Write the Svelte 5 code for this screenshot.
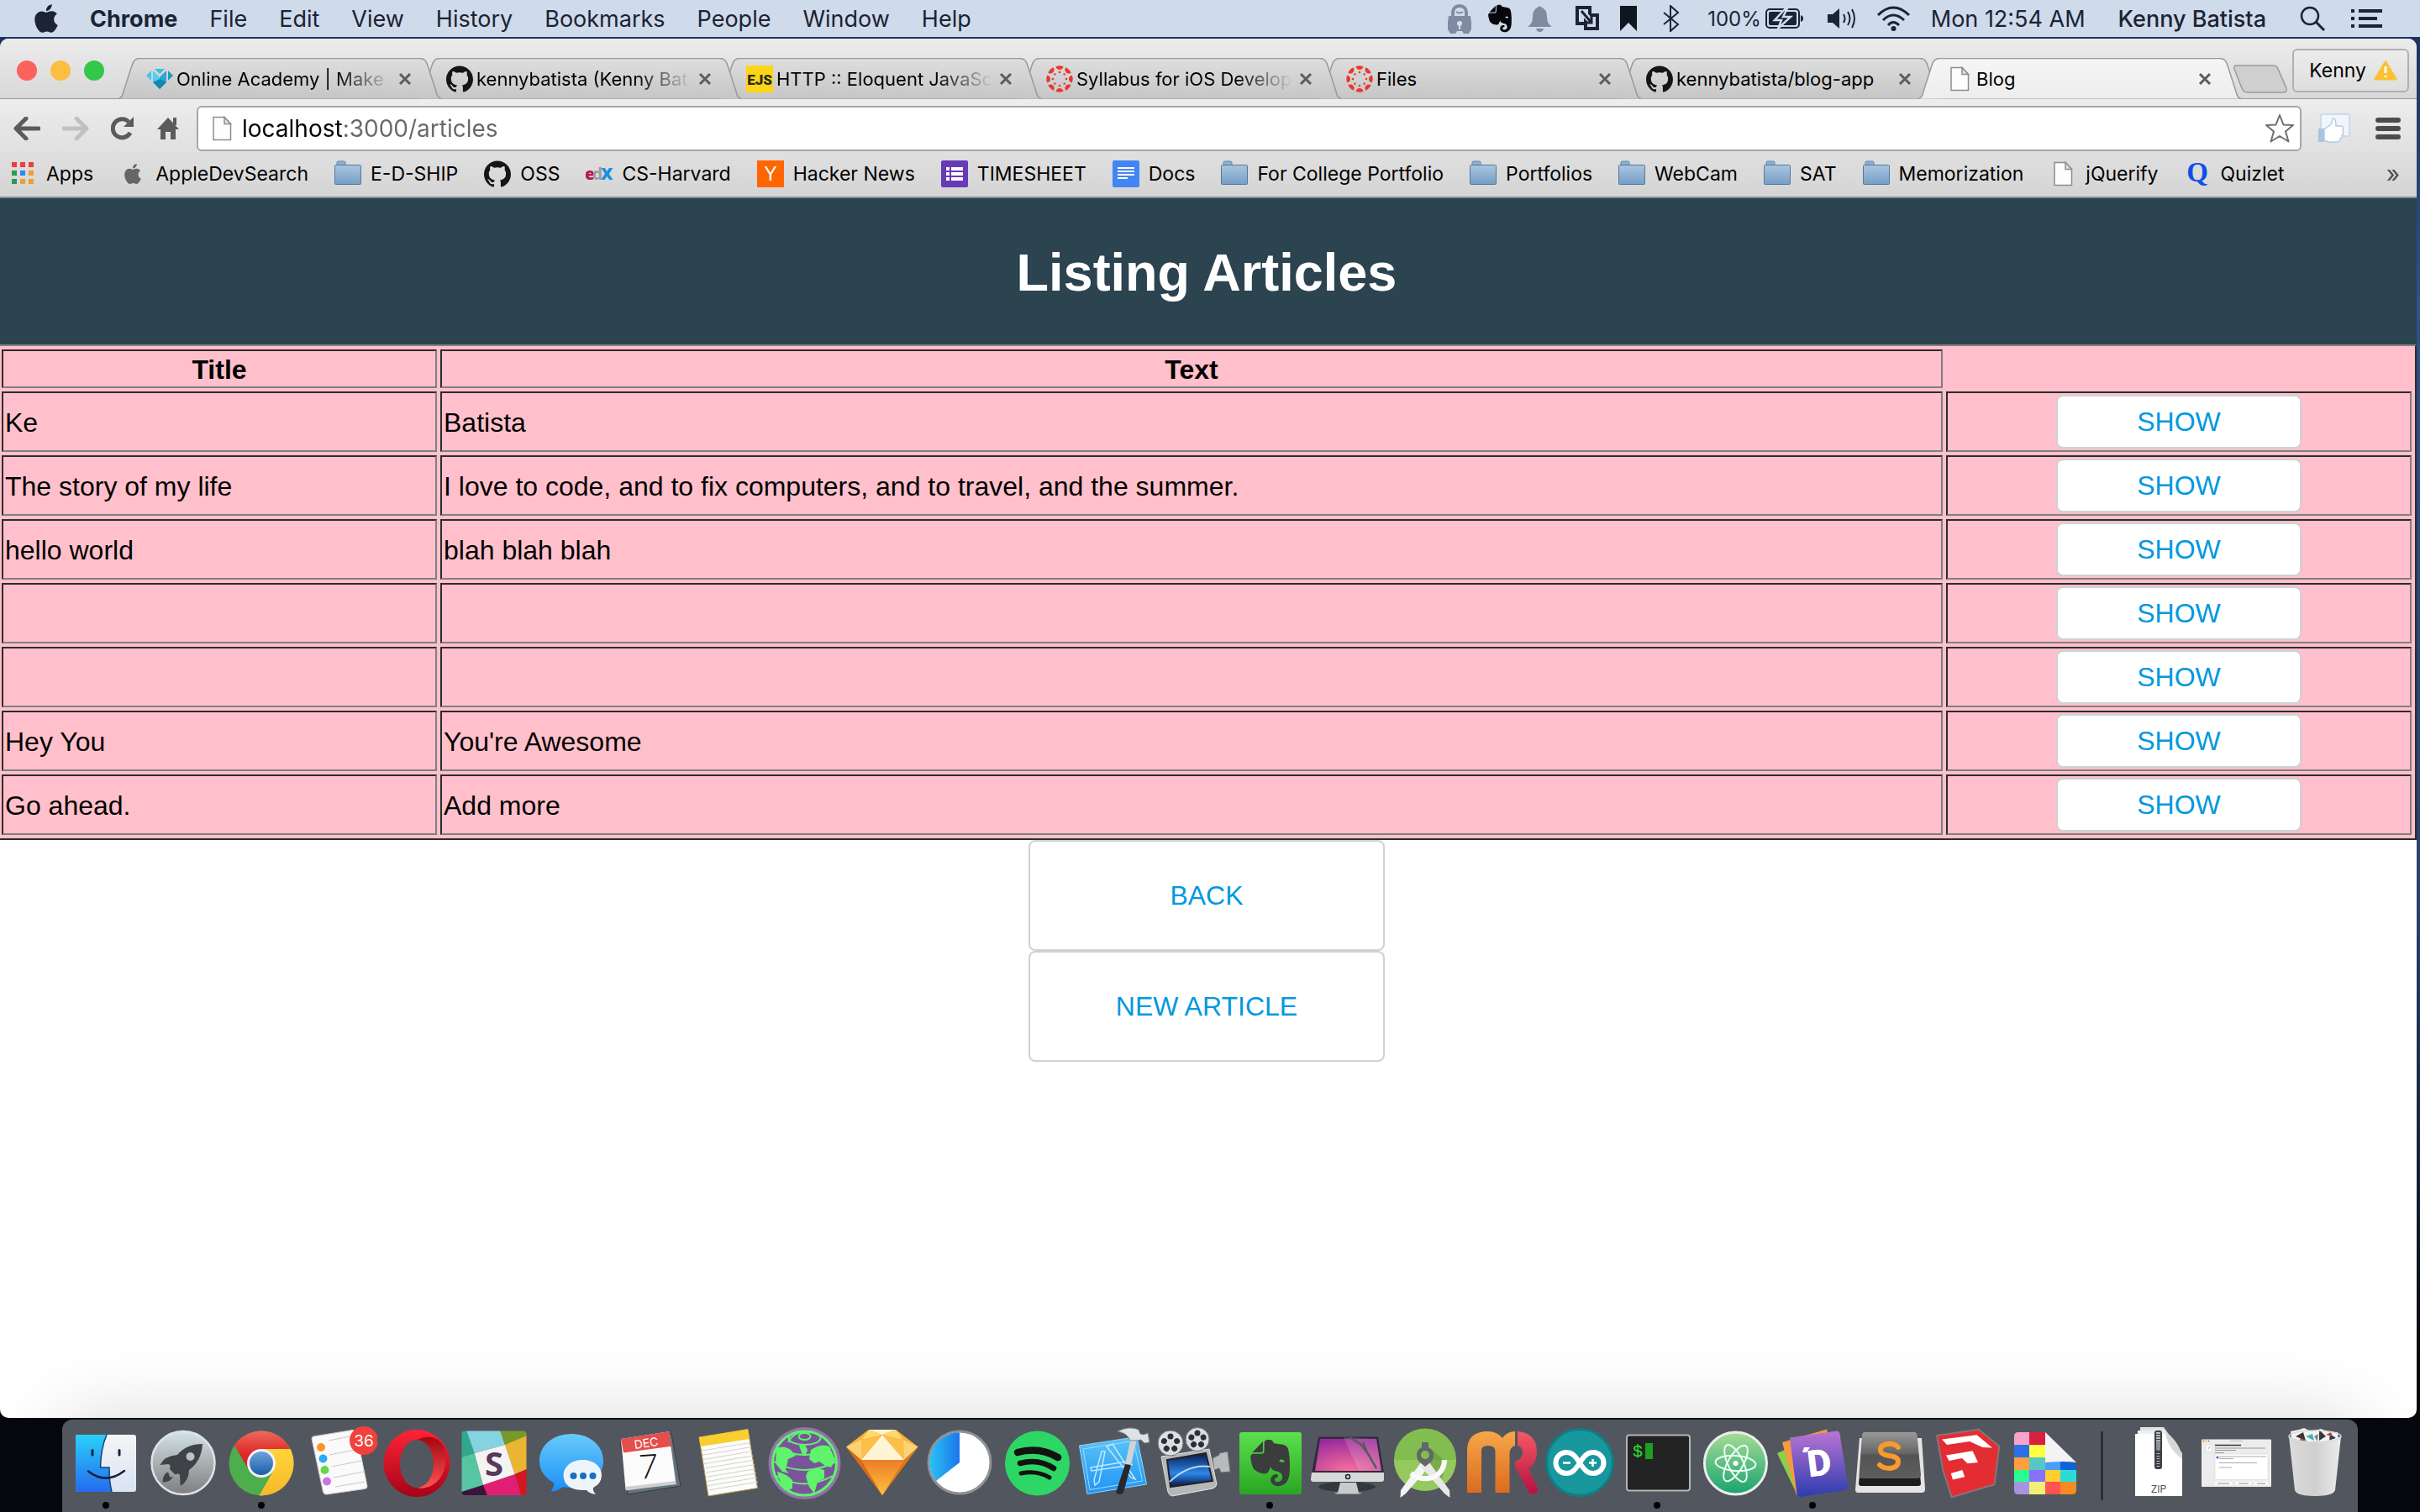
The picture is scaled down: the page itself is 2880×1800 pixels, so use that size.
<script>
  const menus = ['File', 'Edit', 'View', 'History', 'Bookmarks', 'People', 'Window', 'Help'];

  const tabs = [
    { title: 'Online Academy | Make', icon: 'academy', long: true },
    { title: 'kennybatista (Kenny Bat', icon: 'github', long: true },
    { title: 'HTTP :: Eloquent JavaSc', icon: 'ejs', long: true },
    { title: 'Syllabus for iOS Develop', icon: 'canvas', long: true },
    { title: 'Files', icon: 'canvas' },
    { title: 'kennybatista/blog-app', icon: 'github' },
    { title: 'Blog', icon: 'page', active: true }
  ];

  const bookmarks = [
    { label: 'Apps', icon: 'apps' },
    { label: 'AppleDevSearch', icon: 'apple' },
    { label: 'E-D-SHIP', icon: 'folder' },
    { label: 'OSS', icon: 'github' },
    { label: 'CS-Harvard', icon: 'edx' },
    { label: 'Hacker News', icon: 'hn' },
    { label: 'TIMESHEET', icon: 'forms' },
    { label: 'Docs', icon: 'docs' },
    { label: 'For College Portfolio', icon: 'folder' },
    { label: 'Portfolios', icon: 'folder' },
    { label: 'WebCam', icon: 'folder' },
    { label: 'SAT', icon: 'folder' },
    { label: 'Memorization', icon: 'folder' },
    { label: 'jQuerify', icon: 'page' },
    { label: 'Quizlet', icon: 'quizlet' }
  ];

  const articles = [
    { title: 'Ke', text: 'Batista' },
    { title: 'The story of my life', text: 'I love to code, and to fix computers, and to travel, and the summer.' },
    { title: 'hello world', text: 'blah blah blah' },
    { title: '', text: '' },
    { title: '', text: '' },
    { title: 'Hey You', text: "You're Awesome" },
    { title: 'Go ahead.', text: 'Add more' }
  ];

  const apps = [
    { id: 'finder', name: 'Finder', running: true },
    { id: 'launchpad', name: 'Launchpad' },
    { id: 'chrome', name: 'Chrome', running: true },
    { id: 'reminders', name: 'Reminders' },
    { id: 'opera', name: 'Opera' },
    { id: 'slack', name: 'Slack' },
    { id: 'messages', name: 'Messages' },
    { id: 'calendar', name: 'Calendar' },
    { id: 'notes', name: 'Notes' },
    { id: 'tor', name: 'Tor Browser' },
    { id: 'sketch', name: 'Sketch' },
    { id: 'timer', name: 'Timer' },
    { id: 'spotify', name: 'Spotify' },
    { id: 'xcode', name: 'Xcode' },
    { id: 'video', name: 'Video editor' },
    { id: 'evernote', name: 'Evernote', running: true },
    { id: 'cleaner', name: 'CleanMyMac' },
    { id: 'android', name: 'Android Studio' },
    { id: 'rubymine', name: 'Mockup' },
    { id: 'arduino', name: 'Arduino' },
    { id: 'terminal', name: 'Terminal', running: true },
    { id: 'atom', name: 'Atom' },
    { id: 'dash', name: 'Dash', running: true },
    { id: 'sublime', name: 'Sublime Text' },
    { id: 'sketchup', name: 'SketchUp' },
    { id: 'swatches', name: 'Swatches' }
  ];

  const stacks = [
    { id: 'zip', name: 'Archive' },
    { id: 'window', name: 'Minimized window' },
    { id: 'trash', name: 'Trash' }
  ];

  const applePath =
    'M12.152 6.896c-.948 0-2.415-1.078-3.96-1.04-2.04.027-3.91 1.183-4.961 3.014-2.117 3.675-.546 9.103 1.519 12.09 1.013 1.454 2.208 3.09 3.792 3.039 1.52-.065 2.09-.987 3.935-.987 1.831 0 2.35.987 3.96.948 1.637-.026 2.676-1.48 3.676-2.948 1.156-1.688 1.636-3.325 1.662-3.415-.039-.013-3.182-1.221-3.22-4.857-.026-3.04 2.48-4.494 2.597-4.559-1.429-2.09-3.623-2.324-4.39-2.376-2-.156-3.675 1.09-4.61 1.09zM15.53 3.83c.843-1.012 1.4-2.427 1.245-3.83-1.207.052-2.662.805-3.532 1.818-.78.896-1.454 2.338-1.273 3.714 1.338.104 2.715-.688 3.559-1.701';
  const githubPath =
    'M12 .297c-6.63 0-12 5.373-12 12 0 5.303 3.438 9.8 8.205 11.385.6.113.82-.258.82-.577 0-.285-.01-1.04-.015-2.04-3.338.724-4.042-1.61-4.042-1.61C4.422 18.07 3.633 17.7 3.633 17.7c-1.087-.744.084-.729.084-.729 1.205.084 1.838 1.236 1.838 1.236 1.07 1.835 2.809 1.305 3.495.998.108-.776.417-1.305.76-1.605-2.665-.3-5.466-1.332-5.466-5.93 0-1.31.465-2.38 1.235-3.22-.135-.303-.54-1.523.105-3.176 0 0 1.005-.322 3.3 1.23.96-.267 1.98-.399 3-.405 1.02.006 2.04.138 3 .405 2.28-1.552 3.285-1.23 3.285-1.23.645 1.653.24 2.873.12 3.176.765.84 1.23 1.91 1.23 3.22 0 4.61-2.805 5.625-5.475 5.92.42.36.81 1.096.81 2.22 0 1.606-.015 2.896-.015 3.286 0 .315.21.69.825.57C20.565 22.092 24 17.592 24 12.297c0-6.627-5.373-12-12-12';
  const evernotePath =
    'M8.222 5.393c0 .239-.02.637-.256.895-.257.24-.652.259-.888.259H4.552c-.73 0-1.165 0-1.46.04-.159.02-.356.1-.455.14-.04.019-.04 0-.02-.02L8.38.796c.02-.02.04-.02.02.02-.04.099-.118.298-.138.457-.04.298-.04.736-.04 1.472v2.647zm5.348 17.869c-.67-.438-1.026-1.015-1.164-1.373a2.924 2.924 0 0 1-.217-1.095 3.007 3.007 0 0 1 3-3.004c.493 0 .888.398.888.895a.88.88 0 0 1-.454.776c-.099.06-.237.1-.336.12-.098.02-.473.06-.65.218-.198.16-.356.418-.356.697 0 .298.118.577.316.776.355.358.829.557 1.342.557a2.436 2.436 0 0 0 2.427-2.447c0-1.214-.809-2.29-1.875-2.766-.158-.08-.414-.14-.651-.2a8.04 8.04 0 0 0-.592-.1c-.829-.1-2.901-.755-3.04-2.605 0 0-.611 2.785-1.835 3.54-.118.06-.276.12-.454.16-.177.04-.374.06-.434.06-1.993.12-4.105-.517-5.565-2.03 0 0-.987-.815-1.5-3.103-.118-.558-.355-1.553-.493-2.488-.06-.338-.08-.597-.099-.836 0-.975.592-1.631 1.342-1.73h4.026c.69 0 1.086-.18 1.342-.42.336-.317.415-.775.415-1.312V1.354C9.05.617 9.703 0 10.669 0h.474c.197 0 .434.02.651.04.158.02.296.06.533.12 1.204.298 1.46 1.532 1.46 1.532s2.27.398 3.415.597c1.085.199 3.77.378 4.282 3.104 1.204 6.487.474 12.775.415 12.775-.849 6.129-5.901 5.83-5.901 5.83a4.1 4.1 0 0 1-2.428-.736zm4.54-13.034c-.652-.06-1.204.2-1.402.697-.04.1-.079.219-.059.278.02.06.06.08.099.1.237.12.631.179 1.204.239.572.06.967.1 1.223.06.04 0 .08-.02.119-.08.04-.06.02-.18.02-.28-.06-.536-.553-.934-1.204-1.014z';

  const spokes = [0, 45, 90, 135, 180, 225, 270, 315];
  const reelHoles = [0, 72, 144, 216, 288];
  const noteLines = [0, 1, 2, 3, 4, 5, 6, 7, 8, 9];
  const swatches = [
    [9, 15, '#f9a3cb'], [27, 15, '#d81f3d'],
    [9, 30, '#2c70e8'], [27, 30, '#ffff44'],
    [9, 45, '#ff9f3d'], [27, 45, '#56c7c2'], [46, 45, '#46a0f5'], [64, 45, '#1160d8'],
    [9, 60, '#2bfc8f'], [27, 60, '#8672ff'], [46, 60, '#ffce2f'], [64, 60, '#2bdcd5'],
    [9, 74, '#a694e2'], [27, 74, '#f1ef77'], [46, 74, '#ff5352'], [64, 74, '#f58b22']
  ];
</script>

{#snippet smallIcon(kind)}
  <svg class="small" viewBox="0 0 32 32" aria-hidden="true">
    {#if kind === 'github'}
      <path d={githubPath} transform="scale(1.333)" fill="#151515" />
    {:else if kind === 'page'}
      <path d="M6 2.5h13l7.5 8v19H6z" fill="#fdfdfd" stroke="#8d8d8d" stroke-width="1.5" />
      <path d="M19 2.500v8h7.500z" fill="#e4e4e4" stroke="#8d8d8d" stroke-width="1.5" />
    {:else if kind === 'folder'}
      <path d="M3 6V2.500q0-1.500 1.500-1.500h7q1.500 0 1.500 1.500V6z" fill="#8eb0cf" stroke="#5f86a8" />
      <rect x="0.500" y="5.500" width="31" height="23" rx="1" fill="url(#folderFill)" stroke="#56789a" />
    {:else if kind === 'canvas'}
      <g fill="#e63a2e">
        {#each spokes as a}
          <g transform="rotate({a} 16 16)">
            <path d="M11.500 1.200Q16-0.600 20.500 1.200Q19.500 5 16 5Q12.500 5 11.500 1.200z" />
            <circle cx="16" cy="8" r="1.300" />
          </g>
        {/each}
      </g>
    {:else if kind === 'academy'}
      <path d="M0 12L6 6V18z" fill="#45c6ea" />
      <path d="M32 12L26 6V18z" fill="#1c9cc6" />
      <path d="M10 4H22L16 10z" fill="#38bce4" />
      <path d="M8 6L16 14V28L8 20z" fill="#4fd0f2" />
      <path d="M24 6L16 14V28L24 20z" fill="#28a8d2" />
      <path d="M8 20L16 16L24 20L16 28z" fill="#1687b3" />
    {:else if kind === 'ejs'}
      <rect width="32" height="32" fill="#fcd616" />
      <text x="16" y="23" text-anchor="middle" font-family="Roboto, sans-serif" font-weight="900" font-size="17" fill="#2b2a20">EJS</text>
    {:else if kind === 'apps'}
      <g fill="#f23c3c"><rect x="2" y="2" width="6" height="6" /><rect x="12" y="2" width="6" height="6" /><rect x="22" y="2" width="6" height="6" /></g>
      <g fill="#2d9a55"><rect x="2" y="12" width="6" height="6" /><rect x="2" y="22" width="6" height="6" /></g>
      <rect x="12" y="12" width="6" height="6" fill="#2a8bf2" />
      <g fill="#eda02c"><rect x="12" y="22" width="6" height="6" /><rect x="22" y="12" width="6" height="6" /><rect x="22" y="22" width="6" height="6" /></g>
    {:else if kind === 'apple'}
      <path d={applePath} transform="translate(4 4)" fill="#666" />
    {:else if kind === 'edx'}
      <text x="-1" y="23" font-family="Open Sans, sans-serif" font-weight="800" font-size="19" fill="#b5145b">e</text>
      <text x="8" y="23" font-family="Open Sans, sans-serif" font-weight="700" font-size="19" fill="#9b9b9b">d</text>
      <text x="18" y="23" font-family="Open Sans, sans-serif" font-weight="800" font-size="20" fill="#1a8fdf">X</text>
    {:else if kind === 'hn'}
      <rect width="32" height="32" fill="#ff6600" />
      <text x="16" y="24" text-anchor="middle" font-family="Liberation Sans, sans-serif" font-size="23" fill="#fff">Y</text>
    {:else if kind === 'forms'}
      <rect width="32" height="32" rx="2" fill="#673ab7" />
      <g fill="#fff"><rect x="6" y="8" width="4" height="4" /><rect x="12" y="8" width="14" height="4" /><rect x="6" y="14" width="4" height="4" /><rect x="12" y="14" width="14" height="4" /><rect x="6" y="20" width="4" height="4" /><rect x="12" y="20" width="14" height="4" /></g>
    {:else if kind === 'docs'}
      <rect width="32" height="32" rx="2" fill="#4285f4" />
      <g fill="#fff"><rect x="6" y="8" width="20" height="2" /><rect x="6" y="12" width="20" height="2" /><rect x="6" y="16" width="20" height="2" /><rect x="6" y="20" width="12" height="2" /></g>
    {:else if kind === 'quizlet'}
      <text x="15" y="25" text-anchor="middle" font-family="Liberation Serif, serif" font-weight="700" font-size="33" fill="#0d50e8">Q</text>
    {/if}
  </svg>
{/snippet}

{#snippet dockIcon(id)}
  <svg class="dock-icon" viewBox="0 0 92 98" aria-hidden="true">
    {#if id === 'finder'}
      <rect x="10" y="18" width="72" height="68" rx="3" fill="url(#finderRight)" />
      <path d="M13 18H47Q40 34 39.500 57H50Q50 74 53 86H13Q10 86 10 83V21Q10 18 13 18z" fill="url(#finderLeft)" />
      <path d="M47 18Q40 34 39.500 57H50Q50 74 53 86" fill="none" stroke="#1b3f74" stroke-width="1.500" />
      <path d="M30 36.500V42M62 36.500V42" stroke="#16233a" stroke-width="3" stroke-linecap="round" />
      <path d="M25 61.500Q46 78 68 61" fill="none" stroke="#16233a" stroke-width="2.500" stroke-linecap="round" />
    {:else if id === 'launchpad'}
      <circle cx="46" cy="51.500" r="37.500" fill="url(#launch)" stroke="#dbe4ea" stroke-width="2.500" />
      <path d="M69 29Q50 29 39 42Q24 43 18.500 54L29 53L31 56Q29 58 30.500 59.500L36 65Q38 66 40 64L42 66L42.700 79Q53 73 53 60Q68 49 69 29z" fill="#3f4347" />
      <circle cx="54.500" cy="44" r="5" fill="#b9c2c7" />
      <path d="M28 62.500Q22 64 21.500 74.500Q32 74 34 67.500L30.500 69z" fill="#3f4347" />
    {:else if id === 'chrome'}
      <circle cx="46" cy="52" r="38.500" fill="#4cae4c" />
      <path d="M14 30.600A38.500 38.500 0 0 1 80.600 35H46L31.300 60.500z" fill="url(#chromeRed)" />
      <path d="M80.600 35A38.500 38.500 0 0 1 43.400 90.400L60.700 60.500L46 35z" fill="url(#chromeYellow)" />
      <circle cx="46" cy="52" r="17" fill="#f4f4f4" />
      <circle cx="46" cy="52" r="14" fill="url(#chromeBlue)" />
    {:else if id === 'reminders'}
      <path d="M16 20L62 12.500Q66 12 67 16L80 79Q80.500 82 77 82.500L32 89Q28 89.500 27.500 86L14 23Q14 20.500 16 20z" fill="#fafafa" stroke="#c9c9c9" />
      <path d="M34 25L60 20M35 42L70 35M38 56L73 49M40 69L76 62M42 80L77 74" stroke="#c9c9c9" />
      <circle cx="25" cy="33" r="5" fill="#fd9426" /><circle cx="27.500" cy="46.500" r="5" fill="#28acf5" />
      <circle cx="29.500" cy="60" r="5" fill="#64d845" /><circle cx="32" cy="73.500" r="5" fill="#cc73e1" />
      <circle cx="76" cy="25" r="17" fill="#f2403c" />
      <text x="76" y="32" text-anchor="middle" font-family="Inter, sans-serif" font-size="19" fill="#fff">36</text>
    {:else if id === 'opera'}
      <path fill-rule="evenodd" d="M47 12A39.500 40 0 1 1 46.900 12zM47 24A20 28.500 0 1 0 47.100 24z" fill="url(#operaFill)" />
      <path d="M47 24A20 28.500 0 0 1 47 81Q58 84 70 75Q86 60 80 34Q70 14 47 24z" fill="url(#operaInner)" />
    {:else if id === 'slack'}
      <g clip-path="url(#slackClip)">
        <path d="M7 13H13L22.700 40L7 45z" fill="#2fa98c" />
        <path d="M13 13H53.300L59 30L22.700 40z" fill="#85d3e0" />
        <path d="M53.300 13H85V20L59 30z" fill="#78982a" />
        <path d="M59 30L85 19V59L70.700 65z" fill="#ecb433" />
        <path d="M70.700 65L85 59V91H78.500z" fill="#d4161f" />
        <path d="M32.900 77.700L70.700 65L78.500 91H38z" fill="#e01f74" />
        <path d="M7 86L32.900 77.700L38.200 91H7z" fill="#3c123c" />
        <path d="M7 45L22.700 40L32.900 77.700L7 86z" fill="#57c5a1" />
        <path d="M22.700 40L59 30L70.700 65L32.900 77.700z" fill="#f5f3f1" />
      </g>
      <text x="46" y="67" text-anchor="middle" font-family="Open Sans, sans-serif" font-weight="700" font-size="40" fill="#553a5b">S</text>
    {:else if id === 'messages'}
      <path d="M46 17C68 17 84 31 84 49S68 81 46 81Q40 81 36 80Q30 85 21.500 85.500Q26 80 25 75Q8 66 8 49C8 31 24 17 46 17z" fill="url(#messagesFill)" />
      <path d="M59 48C73 48 82 56 82 66Q82 76 72 81Q71 85 75 89Q67 88 64 84Q37 85 36.500 66C37 56 46 48 59 48z" fill="#eef5fa" />
      <circle cx="48.500" cy="67" r="4" fill="#176fc1" /><circle cx="60" cy="67" r="4" fill="#176fc1" /><circle cx="71.500" cy="67" r="4" fill="#176fc1" />
    {:else if id === 'calendar'}
      <path d="M12 27L73 17L84 79L21 89z" fill="#65737c" stroke="#313c43" />
      <path d="M13 23L70 14.300L78.500 76.700L18.500 83z" fill="#fbfbfb" />
      <path d="M13 23L70 14.300L73 31.700L16 39.500z" fill="#e54f4b" />
      <path d="M18 80L78 73L78.500 77L19 84.500z" fill="#cfcfcf" />
      <text x="43" y="33" text-anchor="middle" transform="rotate(-8 43 28)" font-family="Inter, sans-serif" font-size="14" fill="#fff">DEC</text>
      <text x="46" y="70" text-anchor="middle" transform="rotate(-4 46 57)" font-family="Lato, sans-serif" font-weight="300" font-size="40" fill="#111">7</text>
    {:else if id === 'notes'}
      <path d="M13 21L71 11.500L82.500 81.500L24 91z" fill="#fcfcfa" stroke="#b49a4a" />
      <path d="M13 21L71 11.500L73 23L15 32z" fill="#f9cf2f" />
      {#each noteLines as n}
        <path d="M{16 + n} {37 + n * 5.200}L{74 + n} {27.500 + n * 5.200}" stroke="#d2d2d2" />
      {/each}
    {:else if id === 'tor'}
      <circle cx="46.500" cy="52" r="43" fill="#9273ac" />
      <circle cx="46.500" cy="52" r="38" fill="#7a549b" stroke="#5ff46c" stroke-width="3" />
      <g fill="none" stroke="#5ff46c" stroke-width="2"><ellipse cx="46.500" cy="20" rx="7" ry="4" /><ellipse cx="46.500" cy="22" rx="19" ry="8" /><path d="M16 34Q46 50 77 34M10 50Q46 70 84 50M13 67Q46 86 80 67M27 27Q32 16 46 14" /></g>
      <path d="M13 34Q22 30 30 36L36 43L27 47L24 60L28 64L20 62L12 52zM14 62Q24 64 32 72L32 82L26 84Q16 76 14 62zM40 31Q46 26 50 36Q48 44 44 42zM54 36Q66 28 76 32L83 48L78 57L70 54L64 50L58 52L52 47zM50 62Q60 56 70 60L70 70L62 74L58 88L52 80L48 68z" fill="#5ff46c" />
    {:else if id === 'sketch'}
      <path d="M31 12H63L89.500 32.500L47 90L4 32.500z" fill="#f5972a" />
      <path d="M31 12H63L47 18z" fill="#fff3cd" />
      <path d="M31 12L47 18L22 24zM63 12L47 18L72 24z" fill="#ffd96e" />
      <path d="M31 12L22 24L4 32.500zM63 12L72 24L89.500 32.500z" fill="#f9b437" />
      <path d="M47 18L22 48H73z" fill="#fff4d6" />
      <path d="M22 24L47 18L22 48zM72 24L47 18L73 48z" fill="#fdbf49" />
      <path d="M22 24L4 32.500L22 48zM72 24L89.500 32.500L73 48z" fill="#fbd377" />
      <path d="M4 32.500L22 48L47 90z" fill="#d86b12" /><path d="M89.500 32.500L73 48L47 90z" fill="#dd7717" />
      <path d="M22 48H73L47 90z" fill="url(#sketchFill)" />
    {:else if id === 'timer'}
      <circle cx="46" cy="51" r="37" fill="#fff" stroke="#8f9194" stroke-width="3" />
      <path d="M46 51V15.500A35.500 35.500 0 0 0 18 73z" fill="url(#timerFill)" />
    {:else if id === 'spotify'}
      <circle cx="46.500" cy="52" r="38.500" fill="#2ed665" />
      <g fill="none" stroke="#121212" stroke-linecap="round"><path d="M23 39Q49 32 71 45" stroke-width="8.500" /><path d="M26 52Q48 46 66 58" stroke-width="6.500" /><path d="M27 64Q46 60 61 69" stroke-width="5" /></g>
    {:else if id === 'xcode'}
      <path d="M4.500 31L73 20.500L84.500 77L14 88.500z" fill="url(#xcodeFill)" stroke="#8ed4ff" />
      <path d="M9 35L69 25.500L79.500 73L17 83.500z" fill="none" stroke="#9cdcff" />
      <path d="M37 32L44 29L71 71L66 69zM35 38L28 74L23 78L22 72L31 38zM18 57L66 49L67 54L19 61z" fill="none" stroke="#bfe8ff" stroke-width="1.500" />
      <path d="M60 50L67 50L57 87Q53 91 48 87z" fill="#26282b" />
      <path d="M66 22L73 23L66 54L59 53z" fill="#cfd4d8" />
      <path d="M50 14Q64 7 75 12L77 17L81 18L86 16L88 27L82 28L78 24L72 25L65 25Q62 16 50 14z" fill="#dde3e6" stroke="#7f8a90" />
    {:else if id === 'video'}
      <path d="M70 46L78 42V40L88 38L91 62L80 63L78 58L72 60z" fill="#b8bbbe" stroke="#6b6f73" />
      <path d="M9 44L66 35L75 77Q74 81 70 82L22 91Q18 90 17 86z" fill="#b5b6b8" stroke="#e4e4e4" />
      <path d="M16 48L62 40L70 73L20 80z" fill="url(#videoFill)" stroke="#222" stroke-width="2" />
      <path d="M19 74Q42 52 67 56" fill="none" stroke="#dff3ff" stroke-width="2" opacity=".8" />
      <g fill="#dcdedf" stroke="#707477"><circle cx="20" cy="28" r="15" /><circle cx="52" cy="23.500" r="14" /></g>
      {#each reelHoles as a}
        <circle cx="20" cy="20" r="3.500" fill="#2a3038" transform="rotate({a} 20 28)" />
        <circle cx="52" cy="16" r="3.500" fill="#2a3038" transform="rotate({a} 52 23.500)" />
      {/each}
    {:else if id === 'evernote'}
      <rect x="10" y="15" width="74" height="74" rx="3" fill="url(#evernoteFill)" />
      <path d={evernotePath} transform="translate(19 24) scale(2.300)" fill="#3a3d3b" />
    {:else if id === 'cleaner'}
      <ellipse cx="46" cy="80" rx="34" ry="6" fill="#33383e" />
      <path d="M12 20.500H83L90 64H4z" fill="#33283c" />
      <path d="M14 23H81L87 61H8z" fill="url(#cleanerFill)" />
      <path d="M42 21L60 61H87L81 23z" fill="#fff" opacity=".15" />
      <path d="M4 63H90V71Q90 74 87 74H6Q3 74 3 71z" fill="#d7d8da" />
      <path d="M38 75H57L60 87H64L60 88.500H34L31 87H35z" fill="#c8cacc" />
      <circle cx="47" cy="68" r="2.500" fill="none" stroke="#222" stroke-width="1.500" />
      <path d="M49 21L62 29L72 42L81 58L70 39L65 27" fill="none" stroke="#5a5a60" stroke-width="2.500" />
    {:else if id === 'android'}
      <circle cx="47" cy="47.500" r="37" fill="#83bd4f" /><path d="M10 48A37 37 0 0 0 84 48z" fill="#95c95e" />
      <path d="M54 35L72 50L66 76L50 56z" fill="#5d8f38" opacity=".5" />
      <path d="M42 51L52 56L24 88L17.500 93L18 84z" fill="#f4f4f4" /><path d="M52 51L42 56L70 88L76.500 93L76 84z" fill="#e8e8e8" />
      <path d="M30 64Q44 74 58 68Q70 61 70 48" fill="none" stroke="#fafafa" stroke-width="6" />
      <path d="M43 27H51V33Q57 36 57 42Q57 49 52 52L47 56L42 52Q37 49 37 42Q37 36 43 33z" fill="#61676a" /><circle cx="47" cy="42" r="5" fill="#83bd4f" />
    {:else if id === 'rubymine'}
      <path d="M4 87V37Q4 14 29 14Q39 14 46 22Q52 14 61 14V31Q54 33 54.500 42V87H37.500V37Q37 31 29 31Q21 31 21 37V87z" fill="url(#mFill)" />
      <path d="M64 14Q87 16 87 39Q87 52 77 58L88 82Q89 88 82 88.500Q78 89 76 84L61 56Q59 50 66 47Q72 43 69 35Q67 31 64 31z" fill="url(#rFill)" />
    {:else if id === 'arduino'}
      <circle cx="46" cy="51" r="39.500" fill="#18979d" stroke="#0f7e86" stroke-width="3" />
      <path d="M46 51.500C40 42 36 39 30 39A12.500 12.500 0 0 0 30 64C36 64 40 61 46 51.500C52 42 56 39 62 39A12.500 12.500 0 0 1 62 64C56 64 52 61 46 51.500z" fill="none" stroke="#fff" stroke-width="6" />
      <path d="M26 51.500H35M57 51.500H66M61.500 47V56" stroke="#fff" stroke-width="2.500" />
    {:else if id === 'terminal'}
      <rect x="10" y="18.500" width="75" height="66" rx="3" fill="#232323" stroke="#b4b4b4" stroke-width="2" />
      <text x="17" y="44" font-family="Liberation Mono, monospace" font-size="20" fill="#27e62c">$</text>
      <rect x="32" y="28" width="9" height="19" fill="#1d9f22" />
    {:else if id === 'atom'}
      <circle cx="46.500" cy="52" r="37" fill="url(#atomFill)" stroke="#ececec" stroke-width="3" />
      <g fill="none" stroke="#e9fff3" stroke-width="2"><ellipse cx="46.500" cy="52" rx="24" ry="9" transform="rotate(4 46.500 52)" /><ellipse cx="46.500" cy="52" rx="24" ry="9" transform="rotate(64 46.500 52)" /><ellipse cx="46.500" cy="52" rx="24" ry="9" transform="rotate(120 46.500 52)" /></g>
      <circle cx="46.500" cy="52" r="3" fill="#fff" />
    {:else if id === 'dash'}
      <path d="M4 40L50 20L66 76L29 92z" fill="#8bcf4a" />
      <path d="M10 27L63 11.500L76 70L27 90z" fill="#f49a42" />
      <path d="M19 21.500L75 13.500Q78 13.500 78.500 17L88.500 80Q88 83 85 84L31 92Q28 92 27.500 89z" fill="url(#dashFill)" />
      <path d="M36 33H43L39 39H34z" fill="#fff" />
      <text x="54" y="67" text-anchor="middle" transform="rotate(-7 53 52)" font-family="Roboto, sans-serif" font-weight="900" font-size="44" fill="#fff">D</text>
    {:else if id === 'sublime'}
      <path d="M10 22H84L88 83Q88 87 84 87H8Q5 87 5 83z" fill="#e4e4e4" />
      <path d="M10 66H82L83 76Q83 79 80 79H12Q9 79 9 76z" fill="#1c1c1c" />
      <path d="M16 15H75Q78 15 78.500 18L83 66Q83 70 79 70H13Q9 70 9.500 66L13 18Q13.500 15 16 15z" fill="url(#sublimeFill)" />
      <path d="M56 33Q51 28 43 29Q34 31 35 37Q36 42 45 43Q56 44 56 50Q56 57 46 58Q38 58 34 54" fill="none" stroke="#fb9a2c" stroke-width="6" stroke-linecap="round" />
    {:else if id === 'sketchup'}
      <path d="M9 19L58.700 11.700L83.300 31.700L77.600 77.300L26.600 92.300L16.300 60z" fill="#e32d33" stroke="#8a7378" stroke-width="2" />
      <path d="M15 23.500L56.500 18.300L75 33.500L63.500 33L48 26L21 30zM20 42.500L51.600 37.300L58 51L45.500 52.300L39 46L23.500 49zM25.700 64L39.400 60L42.200 68.300L28 71.500z" fill="#fff" />
    {:else if id === 'swatches'}
      <g clip-path="url(#swatchClip)">
        {#each swatches as [x, y, colour]}
          <rect {x} {y} width="19" height="16" fill={colour} />
        {/each}
      </g>
      <path d="M46 15L83 51Q70 49 46 51z" fill="#f3f3f3" />
    {:else if id === 'zip'}
      <path d="M24 9H52L74 40V86H24z" fill="#e2e2e2" /><path d="M21 13H54L74 44V88H21z" fill="#efefef" />
      <path d="M18 17H54Q58 36 74 48V91H18z" fill="#fff" /><path d="M54 14Q56 34 74 46Q72 28 54 14z" fill="#d8d8d8" />
      <rect x="41" y="13" width="9" height="46" rx="3" fill="#3b3f44" /><path d="M45.500 15V35" stroke="#b9bdc1" stroke-width="5" stroke-dasharray="2 1" /><rect x="43" y="25" width="5" height="12" rx="2" fill="#8d9297" /><path d="M45.500 40V57" stroke="#b9bdc1" stroke-width="4" stroke-dasharray="1 2" />
      <text x="46" y="87" text-anchor="middle" font-family="Roboto, sans-serif" font-size="12" fill="#555">ZIP</text>
    {:else if id === 'window'}
      <rect x="4" y="23.500" width="83" height="56.500" rx="1" fill="#ececec" />
      <circle cx="6.500" cy="25.500" r="1" fill="#f4605a" /><circle cx="9.500" cy="25.500" r="1" fill="#f6bd3b" /><circle cx="12.500" cy="25.500" r="1" fill="#3fc84d" />
      <path d="M38 25.500H53" stroke="#bbb" /><rect x="9" y="30" width="7" height="8" fill="#fff" stroke="#ccc" stroke-width=".5" /><path d="M12 35L14 32" stroke="#c96" />
      <path d="M20 30.500H51" stroke="#333" stroke-width="1.500" /><path d="M20 34H80M20 36.500H45M20 39.500H31" stroke="#999" />
      <rect x="20" y="41" width="63" height="30.500" fill="#fff" stroke="#d0d0d0" stroke-width=".5" />
      <circle cx="23" cy="45" r="1.500" fill="#3566b8" /><path d="M25 44H81M25 46.500H42M25 51.500H70M25 57H40" stroke="#aaa" />
      <rect x="20" y="74" width="20" height="3.500" fill="#fff" /><rect x="45" y="74" width="18" height="3.500" fill="#fff" /><rect x="67" y="74" width="16" height="3.500" fill="#fff" /><path d="M23 76H37M48 76H60M70 76H80" stroke="#888" />
    {:else if id === 'trash'}
      <path d="M19 22L18 14L28 12L34 10L42 14L54 11L64 15L74 15L75 26H20z" fill="#f3f3f3" />
      <path d="M24 20L33 15L36 25zM52 12L60 20L52 25zM65 17L72 22L64 25z" fill="#35393e" /><path d="M36 20L44 17L46 25z" fill="#3bb7b0" /><path d="M30 22L38 26H28zM60 18L66 15L68 20z" fill="#b5482f" /><path d="M46 20L51 17L50 26z" fill="#7f868c" />
      <path d="M16 20Q46 33 78 20L71 84Q69 91 47 91T23 84z" fill="url(#trashFill)" />
      <ellipse cx="47" cy="20" rx="31" ry="7" fill="none" stroke="#d8dadb" stroke-width="1.500" />
    {/if}
  </svg>
{/snippet}

<svg class="defs" aria-hidden="true">
  <defs>
    <linearGradient id="folderFill" x2="0" y2="1"><stop stop-color="#abc6e0" /><stop offset="1" stop-color="#759dc5" /></linearGradient>
    <linearGradient id="tabFill" x2="0" y2="1"><stop stop-color="#dedede" /><stop offset="1" stop-color="#c6c6c6" /></linearGradient>
    <linearGradient id="tabActive" x2="0" y2="1"><stop stop-color="#f6f6f6" /><stop offset="1" stop-color="#ededed" /></linearGradient>
    <linearGradient id="finderLeft" x2="0" y2="1"><stop stop-color="#2bd0fb" /><stop offset="1" stop-color="#246bee" /></linearGradient>
    <linearGradient id="finderRight" x2="0" y2="1"><stop stop-color="#f5f5f7" /><stop offset="1" stop-color="#d8e4f2" /></linearGradient>
    <linearGradient id="launch" x2="0" y2="1"><stop stop-color="#d3e2e9" /><stop offset="1" stop-color="#7f7e7c" /></linearGradient>
    <linearGradient id="chromeRed" x2="0" y2="1"><stop stop-color="#ee6a5c" /><stop offset=".6" stop-color="#dc2627" /></linearGradient>
    <linearGradient id="chromeYellow" x2="0" y2="1"><stop stop-color="#ffd43a" /><stop offset="1" stop-color="#f6b92b" /></linearGradient>
    <linearGradient id="chromeBlue" x2="0" y2="1"><stop stop-color="#6ea3dd" /><stop offset="1" stop-color="#1a5ea8" /></linearGradient>
    <linearGradient id="operaFill" x2="0" y2="1"><stop stop-color="#ff2338" /><stop offset="1" stop-color="#a50317" /></linearGradient>
    <linearGradient id="operaInner" x2="0" y2="1"><stop stop-color="#a3050f" /><stop offset="1" stop-color="#ff5353" /></linearGradient>
    <linearGradient id="messagesFill" x2="0" y2="1"><stop stop-color="#69cbfa" /><stop offset="1" stop-color="#1a8ff8" /></linearGradient>
    <linearGradient id="sketchFill" x2="0" y2="1"><stop stop-color="#ec7d28" /><stop offset="1" stop-color="#fbc23f" /></linearGradient>
    <linearGradient id="timerFill"><stop stop-color="#2ac3f5" /><stop offset="1" stop-color="#1c75ec" /></linearGradient>
    <linearGradient id="xcodeFill" x2="0" y2="1"><stop stop-color="#5cc4f5" /><stop offset="1" stop-color="#1f94f5" /></linearGradient>
    <linearGradient id="videoFill" x2="0" y2="1"><stop stop-color="#0a1a4c" /><stop offset=".6" stop-color="#2c86e8" /><stop offset="1" stop-color="#071544" /></linearGradient>
    <linearGradient id="evernoteFill" x2="0" y2="1"><stop stop-color="#5be04e" /><stop offset="1" stop-color="#2aa523" /></linearGradient>
    <radialGradient id="cleanerFill" cy="1" r="1"><stop stop-color="#fb6f9d" /><stop offset="1" stop-color="#982b9c" /></radialGradient>
    <linearGradient id="mFill" x2="0" y2="1"><stop stop-color="#f5a848" /><stop offset="1" stop-color="#dd6a20" /></linearGradient>
    <linearGradient id="rFill" x2="0" y2="1"><stop stop-color="#f45a66" /><stop offset="1" stop-color="#b80f41" /></linearGradient>
    <linearGradient id="atomFill" x2="0" y2="1"><stop stop-color="#a7dc94" /><stop offset="1" stop-color="#19a36f" /></linearGradient>
    <linearGradient id="dashFill" x2="0" y2="1"><stop stop-color="#ba74d2" /><stop offset="1" stop-color="#2c3db0" /></linearGradient>
    <linearGradient id="sublimeFill" x2="0" y2="1"><stop stop-color="#999" /><stop offset=".45" stop-color="#666" /><stop offset=".5" stop-color="#545454" /><stop offset="1" stop-color="#5e5e5e" /></linearGradient>
    <linearGradient id="trashFill"><stop stop-color="#dcdcdc" /><stop offset=".5" stop-color="#cfcfcf" /><stop offset="1" stop-color="#ececec" /></linearGradient>
    <clipPath id="slackClip"><rect x="7.500" y="13.500" width="77" height="76.500" rx="4" /></clipPath>
    <clipPath id="swatchClip"><path d="M14 15H46Q50 40 46 51Q70 46 83 53V84Q83 89 78 89H14Q9 89 9 84V20Q9 15 14 15z" /></clipPath>
  </defs>
</svg>

<div class="desktop">
  <header class="menubar">
    <nav class="menus" aria-label="Menu bar">
      <button class="menu" aria-label="Apple menu">
        <svg class="apple" viewBox="2 0 20 24"><path d={applePath} fill="#1b2334" /></svg>
      </button>
      <button class="menu app-name">Chrome</button>
      {#each menus as name}
        <button class="menu">{name}</button>
      {/each}
    </nav>
    <div class="status">
      <div class="tray">
        <svg width="30" height="36" viewBox="0 0 30 36"><g fill="#7f8ba0"><path d="M5 16V11Q6 1 15 1T25 11V16H21V11Q21 5 15 5T9 11V16z" /><path d="M2 15H28L29 22V31L26 36H20L18 33H12L10 36H4L1 31V22z" /></g><path d="M11 10Q15 13 19 10" fill="none" stroke="#7f8ba0" stroke-width="2" /><circle cx="15" cy="24" r="3" fill="#d5dfed" /><rect x="14" y="25" width="2" height="6" fill="#d5dfed" /></svg>
        <svg width="30" height="34" viewBox="1 0 22 24"><path d={evernotePath} fill="#05070b" /></svg>
        <svg width="32" height="32" viewBox="0 0 32 32"><path d="M14 2Q14 0 15.500 2Q23 5 23 14Q23 22 28 25V26H1V25Q6 22 6 14Q6 5 13 2z" fill="#7f8ba0" /><path d="M10 28H19Q18 32 14.500 32T10 28z" fill="#7f8ba0" /></svg>
      </div>
      <svg width="30" height="32" viewBox="0 0 30 32"><path d="M3 3H18V14H13V22H3z" fill="none" stroke="#1b2334" stroke-width="4" /><path d="M13 28V12H27V28z" fill="#cfdaea" stroke="#1b2334" stroke-width="4" /><path d="M9 8L20 20" stroke="#cfdaea" stroke-width="7" /><path d="M8 7L20 21M20 13V21H12" fill="none" stroke="#1b2334" stroke-width="3" /></svg>
      <svg width="20" height="30" viewBox="0 0 20 30"><path d="M0 0H20V30L10 20L0 30z" fill="#10161f" /></svg>
      <svg width="36" height="32" viewBox="0 0 36 32"><path d="M8 9L25 23L16 31V1L25 9L8 23" fill="none" stroke="#1b2334" stroke-width="2" /></svg>
      <div class="battery">
        <span>100%</span>
        <svg width="49" height="26" viewBox="0 0 49 26"><rect x="1" y="2" width="39" height="22" rx="4" fill="none" stroke="#1b2334" stroke-width="2" /><rect x="4" y="5" width="33" height="16" rx="2" fill="#1b2334" /><path d="M42 9Q45 10 45 13T42 17z" fill="#1b2334" /><path d="M24 1L11 15H19L15 25L30 11H21L26 1z" fill="#1b2334" stroke="#cfdaea" stroke-width="2.500" /></svg>
      </div>
      <svg width="35" height="26" viewBox="0 0 35 26"><path d="M1 8H7L15 1V25L7 18H1z" fill="#1b2334" /><path d="M20 8Q23 13 20 18M25 5Q30 13 25 21M30 2Q36 13 30 24" fill="none" stroke="#1b2334" stroke-width="2" /></svg>
      <svg width="41" height="30" viewBox="0 0 41 30"><g fill="none" stroke="#1b2334" stroke-width="3"><path d="M2 11Q20 -7 39 11" /><path d="M8 17Q20 5 33 17" /><path d="M14 23Q20 16 27 23" /></g><circle cx="20.500" cy="27" r="3" fill="#1b2334" /></svg>
      <span>Mon 12:54 AM</span>
      <button class="menu user">Kenny Batista</button>
      <svg width="42" height="30" viewBox="0 0 42 30"><circle cx="17" cy="12" r="10" fill="none" stroke="#1b2334" stroke-width="2.500" /><path d="M24 19L34 29" stroke="#1b2334" stroke-width="3" /></svg>
      <svg width="37" height="22" viewBox="0 0 37 22"><path d="M0 2H4M9 2H37M0 11H4M9 11H31M0 20H4M9 20H37" stroke="#1b2334" stroke-width="4" /></svg>
    </div>
  </header>

  <section class="window" aria-label="Chrome">
    <div class="tabstrip">
      <div class="lights">
        <button class="light red" aria-label="Close window"></button>
        <button class="light yellow" aria-label="Minimize window"></button>
        <button class="light green" aria-label="Zoom window"></button>
      </div>
      <div class="tabs" role="tablist">
        {#each tabs as tab, i}
          <div class="tab" role="tab" tabindex="0" aria-selected={!!tab.active} style:z-index={tab.active ? 20 : 10 - i}>
            <svg class="tab-shape" viewBox="0 0 384 49" preserveAspectRatio="none" aria-hidden="true">
              <path d="M0 48.500C3 48 5 45 6 40L16 9C18 3 20 .500 26 .500H358C364 .500 366 3 368 9L378 40C379 45 381 48 384 48.500" fill={tab.active ? 'url(#tabActive)' : 'url(#tabFill)'} stroke="#9a9a9a" stroke-width="1.500" />
            </svg>
            {@render smallIcon(tab.icon)}
            <span class="tab-title" class:faded={tab.long}>{tab.title}</span>
            <button class="close" aria-label="Close tab">
              <svg width="16" height="16" viewBox="0 0 16 16"><path d="M2 2L14 14M14 2L2 14" stroke="#5c5c5c" stroke-width="3" /></svg>
            </button>
          </div>
        {/each}
      </div>
      <button class="newtab" aria-label="New tab">
        <svg width="66" height="34" viewBox="0 0 66 34"><path d="M4 1H48Q53 1 54 5L64 28Q65 33 60 33H18Q13 33 11 28L2 5Q1 1 4 1z" fill="#cfcfcf" stroke="#9a9a9a" stroke-width="1.500" /></svg>
      </button>
      <button class="profile">
        Kenny
        <svg width="28" height="24" viewBox="0 0 28 24"><path d="M14 2L26 22H2z" fill="#fcc133" stroke="#fcc133" stroke-width="3" stroke-linejoin="round" /><path d="M14 7V15M14 18V20" stroke="#fff" stroke-width="3" /></svg>
      </button>
    </div>

    <div class="toolbar">
      <div class="nav">
        <button class="tool" aria-label="Back"><svg width="32" height="28" viewBox="0 0 32 28"><path d="M30 14H4M15 2L3 14L15 26" fill="none" stroke="#5b5b5b" stroke-width="5" stroke-linejoin="round" stroke-linecap="round" /></svg></button>
        <button class="tool" aria-label="Forward"><svg width="32" height="28" viewBox="0 0 32 28"><path d="M2 14H28M17 2L29 14L17 26" fill="none" stroke="#c1c1c1" stroke-width="5" stroke-linejoin="round" stroke-linecap="round" /></svg></button>
        <button class="tool" aria-label="Reload"><svg width="28" height="28" viewBox="0 0 28 28"><path d="M23 19A11 11 0 1 1 21 6" fill="none" stroke="#5b5b5b" stroke-width="5" /><path d="M27 0V12H15z" fill="#5b5b5b" /></svg></button>
        <button class="tool" aria-label="Home"><svg width="28" height="28" viewBox="0 0 28 28"><path d="M14 1L27 15H23V27H17V18H11V27H5V15H1z" fill="#5b5b5b" /><rect x="20" y="1" width="4" height="9" fill="#5b5b5b" /></svg></button>
      </div>
      <div class="omnibox">
        {@render smallIcon('page')}
        <input class="url" type="text" aria-label="Address" value="localhost:3000/articles" />
        <button class="tool" aria-label="Bookmark this page"><svg width="36" height="36" viewBox="0 0 36 36"><path d="M18 2L22.500 13.500L34 14L25 21.500L28.500 33.500L18 27L7.500 33.500L11 21.500L2 14L13.500 13.500z" fill="#fff" stroke="#6f6f6f" stroke-width="2" stroke-linejoin="round" /></svg></button>
      </div>
      <div class="extras">
        <button class="tool" aria-label="Like"><svg width="38" height="36" viewBox="0 0 38 36"><rect x="3" y="1" width="34" height="26" rx="2" fill="#f1f6fb" stroke="#c9dcef" stroke-width="2" /><rect x="0" y="18" width="7" height="16" fill="#a9c3e2" /><path d="M7 19L14 14Q17 10 17 6Q21 5 21 15H28Q31 17 29 20Q31 24 28 26Q29 29 26 30Q26 34 22 34H12L7 32z" fill="#fff" stroke="#b5cbe5" stroke-width="1.500" /></svg></button>
        <button class="tool" aria-label="Chrome menu"><svg width="30" height="26" viewBox="0 0 30 26"><path d="M3 3H27M3 13H27M3 23H27" stroke="#4c4c4c" stroke-width="6" stroke-linecap="round" /></svg></button>
      </div>
    </div>

    <nav class="bookmarks" aria-label="Bookmarks">
      {#each bookmarks as mark}
        <a class="bookmark" href="#{mark.label}">{@render smallIcon(mark.icon)}{mark.label}</a>
      {/each}
      <button class="more" aria-label="More bookmarks">»</button>
    </nav>

    <main class="page">
      <h1>Listing Articles</h1>
      <table>
        <colgroup><col class="col-title" /><col /><col class="col-action" /></colgroup>
        <thead>
          <tr><th>Title</th><th>Text</th></tr>
        </thead>
        <tbody>
          {#each articles as article}
            <tr>
              <td>{article.title}</td>
              <td>{article.text}</td>
              <td class="cell-action"><button class="action show">SHOW</button></td>
            </tr>
          {/each}
        </tbody>
      </table>
      <div class="actions">
        <button class="action large">BACK</button>
        <button class="action large">NEW ARTICLE</button>
      </div>
    </main>
  </section>

  <footer class="dock">
    {#each apps as app}
      <button class="dock-item" class:running={app.running} aria-label={app.name}>{@render dockIcon(app.id)}</button>
    {/each}
    <span class="divider"></span>
    {#each stacks as item}
      <button class="dock-item" aria-label={item.name}>{@render dockIcon(item.id)}</button>
    {/each}
  </footer>
</div>

<style>
  :global(body) {
    margin: 0;
  }

  button {
    padding: 0;
    border: 0;
    background: none;
    color: inherit;
    font: inherit;
  }

  svg {
    display: block;
    flex: none;
  }

  .defs {
    position: absolute;
    width: 0;
    height: 0;
  }

  .desktop {
    display: flex;
    flex-direction: column;
    height: 100vh;
    overflow: hidden;
    background: linear-gradient(#1a3057 0%, #2f5089 20%, #27406f 60%, #05080c 90%);
    font-family: Inter, sans-serif;
    color: #000;
  }

  .menubar {
    display: flex;
    justify-content: space-between;
    align-items: center;
    height: 44px;
    padding: 0 45px 0 41px;
    background: #cfdaea;
    color: #1b2334;
    font-size: 27px;
    white-space: nowrap;
  }

  .menus,
  .status,
  .tray,
  .battery {
    display: flex;
    align-items: center;
  }

  .menus {
    gap: 38px;
  }

  .status {
    gap: 24px;
  }

  .tray {
    gap: 18px;
  }

  .battery {
    gap: 5px;
    font-size: 24px;
  }

  .apple {
    width: 28px;
    height: 34px;
  }

  .app-name {
    font-weight: 700;
  }

  .user {
    padding: 0 11px 0 15px;
    font-weight: 500;
  }

  .window {
    display: flex;
    flex-direction: column;
    flex: 1;
    min-height: 0;
    margin: 2px 4px 2px 0;
    overflow: hidden;
    border-radius: 10px;
    background: #fff;
  }

  .tabstrip {
    display: flex;
    align-items: flex-end;
    height: 72px;
    padding-right: 9px;
    background: linear-gradient(#ececec, #d8d8d8);
    box-shadow: inset 0 -1px #999;
  }

  .lights {
    display: flex;
    gap: 16px;
    width: 121px;
    padding: 0 0 22px 20px;
  }

  .light {
    width: 24px;
    height: 24px;
    border-radius: 50%;
  }

  .red {
    background: #fc615d;
  }

  .yellow {
    background: #fdbd41;
  }

  .green {
    background: #34c84a;
  }

  .tabs {
    display: flex;
    flex: 0 1 auto;
    min-width: 0;
  }

  .tab {
    position: relative;
    display: flex;
    align-items: center;
    gap: 4px;
    flex: 0 1 384px;
    box-sizing: border-box;
    width: 384px;
    min-width: 0;
    height: 49px;
    margin-right: -27px;
    padding: 0 35px 0 33px;
    font-size: 22px;
  }

  .tab:last-child {
    margin-right: -10px;
  }

  .tab-shape {
    position: absolute;
    inset: 0;
    z-index: -1;
    width: 100%;
    height: 100%;
  }

  .small {
    width: 32px;
    height: 32px;
  }

  .tab-title {
    flex: 1;
    margin-right: 4px;
    white-space: nowrap;
  }

  .faded {
    mask-image: linear-gradient(90deg, #000 calc(100% - 68px), transparent);
  }

  .newtab {
    padding-bottom: 7px;
  }

  .profile {
    display: flex;
    align-items: center;
    gap: 9px;
    box-sizing: border-box;
    height: 52px;
    margin: 0 0 8px auto;
    padding: 0 12px 0 18px;
    border: 2px solid #b0b0b0;
    border-radius: 6px;
    background: linear-gradient(#ececec, #dedede);
    font-size: 23px;
  }

  .toolbar {
    display: flex;
    align-items: center;
    gap: 20px;
    height: 54px;
    padding: 8px 19px 0 16px;
    background: linear-gradient(#ededed, #e0e0e0);
  }

  .nav {
    display: flex;
    align-items: center;
    gap: 26px;
  }

  .extras {
    display: flex;
    align-items: center;
    gap: 30px;
  }

  .omnibox {
    display: flex;
    align-items: center;
    flex: 1;
    gap: 8px;
    box-sizing: border-box;
    height: 54px;
    padding: 0 6px 0 12px;
    border: 2px solid #a6a6a6;
    border-radius: 6px;
    background: #fff;
  }

  .url {
    flex: 1;
    padding: 0;
    border: 0;
    outline: 0;
    background: linear-gradient(90deg, #000 122px, #686868 122px);
    background-clip: text;
    color: transparent;
    font: 28px Inter, sans-serif;
  }

  .bookmarks {
    display: flex;
    align-items: center;
    gap: 31px;
    box-sizing: border-box;
    height: 56px;
    padding: 0 20px 0 12px;
    border-bottom: 2px solid #8a8a8a;
    background: linear-gradient(#e0e0e0, #d4d4d4);
    font-size: 23px;
    white-space: nowrap;
  }

  .bookmark {
    display: flex;
    align-items: center;
    gap: 11px;
    color: #000;
    text-decoration: none;
  }

  .more {
    margin-left: auto;
    color: #4c4c4c;
    font-size: 28px;
  }

  .page {
    flex: 1;
    overflow: hidden;
    font: 32px / 38px 'Liberation Sans', sans-serif;
  }

  h1 {
    margin: 0;
    padding: 50px 4px 48px 0;
    background: #2c4350;
    color: #fff;
    font-size: 63px;
    line-height: 76px;
    text-align: center;
  }

  table {
    width: calc(100% + 4px);
    margin-left: -4px;
    border: 2px solid #808080;
    border-right-color: #2c2c2c;
    border-bottom-color: #2c2c2c;
    border-spacing: 4px;
    table-layout: fixed;
    background: #ffc0cb;
  }

  .col-title {
    width: 518px;
  }

  .col-action {
    width: 554px;
  }

  th,
  td {
    padding: 3px 2px 1px;
    border: 2px solid #2c2c2c;
    border-right-color: #808080;
    border-bottom-color: #808080;
  }

  td {
    height: 64px;
  }

  .cell-action {
    padding: 2px;
  }

  .action {
    box-sizing: border-box;
    border: 2px solid #cfd2d4;
    border-radius: 8px;
    background: #fff;
    color: #0099dd;
  }

  .show {
    display: block;
    width: 292px;
    height: 64px;
    margin: 0 auto;
  }

  .actions {
    display: flex;
    flex-direction: column;
    align-items: center;
    padding-right: 4px;
  }

  .large {
    width: 424px;
    height: 132px;
  }

  .dock {
    display: flex;
    align-items: stretch;
    height: 110px;
    margin: 0 74px;
    padding: 0 6px;
    border-radius: 12px 12px 0 0;
    background: #52575f;
    box-shadow: 0 0 90px rgba(0, 0, 0, 0.16);
    z-index: 1;
  }

  .dock-item {
    display: flex;
    flex: 1;
    flex-direction: column;
    align-items: center;
  }

  .dock-icon {
    width: 92px;
    height: 98px;
  }

  .running::after {
    content: '';
    width: 8px;
    height: 8px;
    border-radius: 50%;
    background: #000;
  }

  .divider {
    width: 3px;
    margin: 14px 20px;
    background: #2b2e35;
  }
</style>
